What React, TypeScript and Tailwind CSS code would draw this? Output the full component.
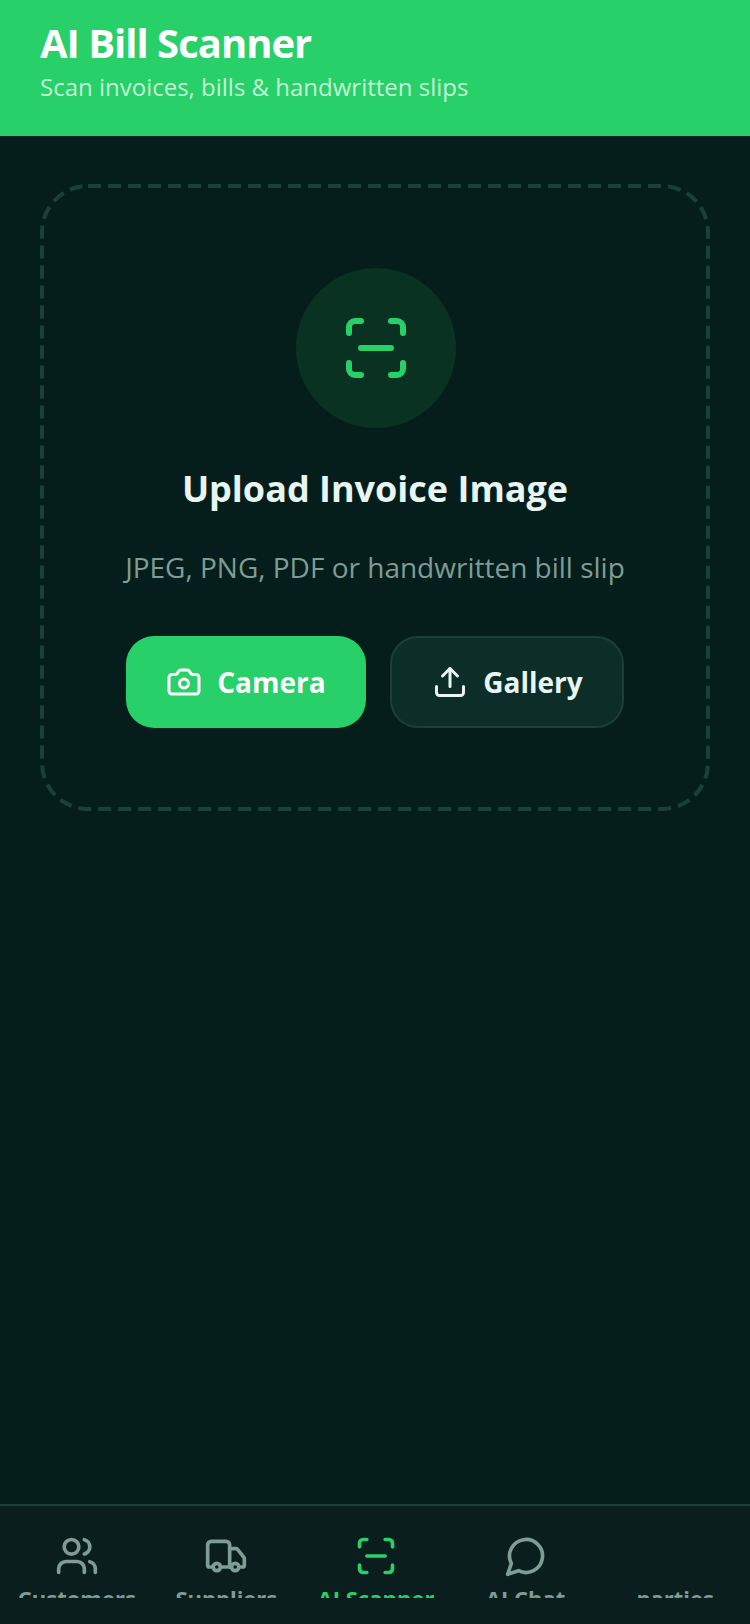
import { Camera, ScanLine, Truck, Upload, Users } from 'lucide-react';
import type { SVGProps } from 'react';

// older lucide bubble, pointed tail at bottom left
function ChatBubble({ size, strokeWidth, ...rest }: SVGProps<SVGSVGElement> & { size: number }) {
  return (
    <svg width={size} height={size} viewBox="0 0 24 24" fill="none" stroke="currentColor" strokeWidth={strokeWidth} strokeLinecap="round" strokeLinejoin="round" {...rest}>
      <path d="M7.9 20A9 9 0 1 0 4 16.1L2 22Z" />
    </svg>
  );
}

const tabs = [
  { label: 'Customers', icon: Users },
  { label: 'Suppliers', icon: Truck },
  { label: 'AI Scanner', icon: ScanLine, active: true },
  { label: 'AI Chat', icon: ChatBubble },
  { label: 'parties' },
];

export default function App() {
  return (
    <div className="w-[750px] h-[1624px] flex flex-col bg-[#051e1b] font-['Open_Sans',sans-serif] overflow-hidden">
      {/* Header */}
      <div className="h-[136px] shrink-0 bg-[#27d068] px-10 pt-[16px]">
        <h1 className="text-[40px] leading-[54px] font-bold tracking-[-1px] text-white">AI Bill Scanner</h1>
        <p className="text-[24px] leading-[34px] text-[#c4f3d6]">Scan invoices, bills &amp; handwritten slips</p>
      </div>

      {/* Upload area */}
      <div className="flex-1 px-10 pt-[48px]">
        <div className="relative h-[627px] flex flex-col items-center pt-[84px]">
          {/* dashed outline, css dashes come out too short here */}
          <svg className="absolute inset-0" width="670" height="627" fill="none">
            <rect x="2" y="2" width="666" height="623" rx="46" stroke="#1c3f3a" strokeWidth="4" strokeDasharray="13 7" />
          </svg>
          <div className="w-[160px] h-[160px] ml-[2px] rounded-full bg-[#0a3222] flex items-center justify-center">
            <ScanLine size={72} strokeWidth={2} className="text-[#27d068]" />
          </div>
          <h2 className="mt-[37px] text-[36px] leading-[48px] font-bold text-[#e8f5f1]">Upload Invoice Image</h2>
          <p className="mt-[34px] text-[28px] leading-[40px] text-[#7f9c95]">JPEG, PNG, PDF or handwritten bill slip</p>
          <div className="mt-[49px] flex gap-6">
            <button className="w-[240px] h-[92px] rounded-[28px] bg-[#27d068] flex items-center justify-center gap-[15px] text-[28px] font-bold text-white">
              <Camera size={36} strokeWidth={2} />
              Camera
            </button>
            <button className="w-[234px] h-[92px] rounded-[28px] bg-[#0d2d28] border-2 border-[#1c3f3a] flex items-center justify-center gap-[15px] text-[28px] font-bold text-[#e8f5f1]">
              <Upload size={36} strokeWidth={2} className="ml-[1px]" />
              Gallery
            </button>
          </div>
        </div>
      </div>

      {/* Bottom tabs */}
      <div className="h-[120px] shrink-0 bg-[#0a1f1d] border-t-2 border-[#1c3f3a] flex pl-[2px]">
        {tabs.map(t => (
          <div key={t.label} className="w-[150px] h-[92px] pt-[28px] overflow-hidden flex flex-col items-center">
            <div className="h-[44px] w-[44px] shrink-0">
              {t.icon && <t.icon size={44} strokeWidth={2} className={t.active ? 'text-[#27d068]' : 'text-[#7f9c95]'} />}
            </div>
            <span className={`mt-[5px] text-[22px] leading-[30px] font-bold whitespace-nowrap ${t.active ? 'text-[#27d068]' : 'text-[#7f9c95]'}`}>
              {t.label}
            </span>
          </div>
        ))}
      </div>
    </div>
  );
}
